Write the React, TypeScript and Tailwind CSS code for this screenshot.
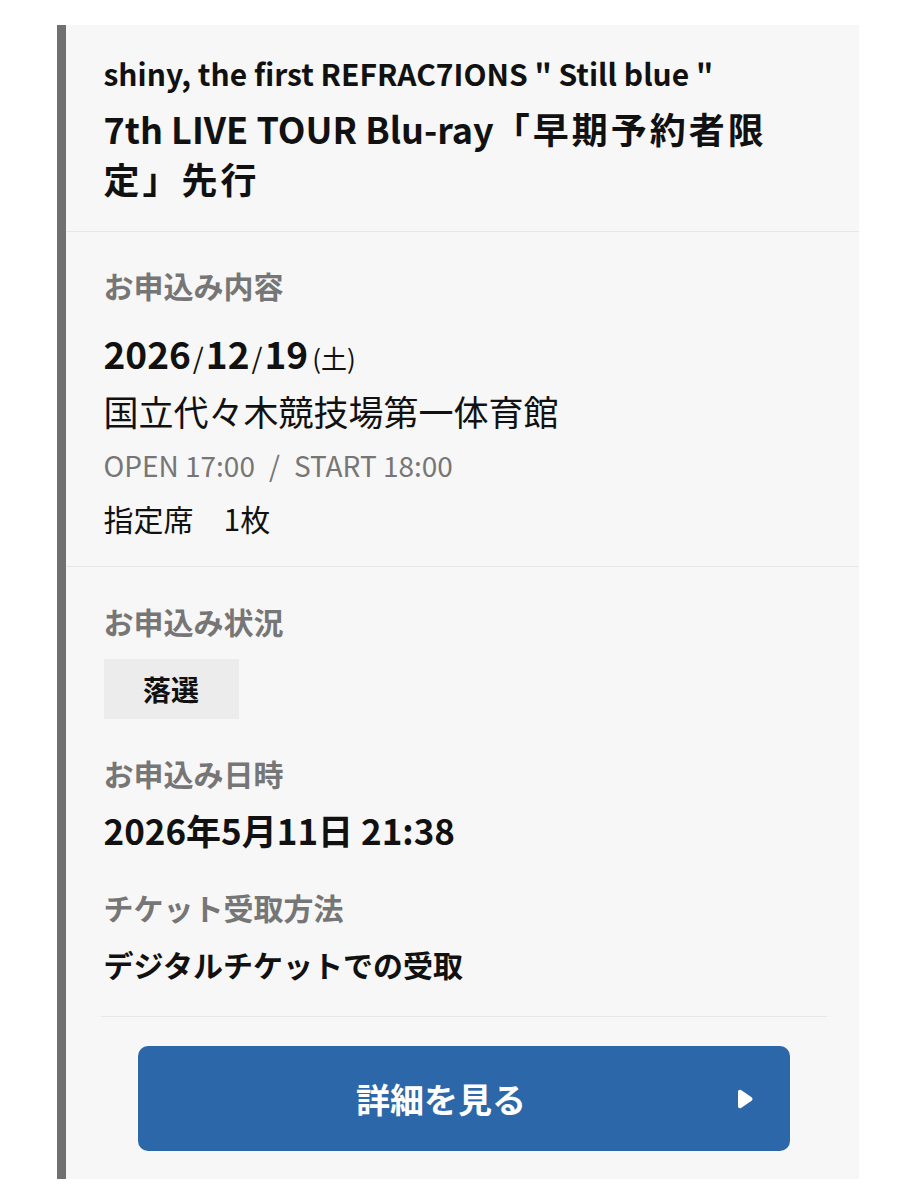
import React from 'react';

const font = { fontFamily: '"Noto Sans CJK JP", "Noto Sans", sans-serif' };

function Label({ children, className = '' }: { children: React.ReactNode; className?: string }) {
  return (
    <p className={`text-[30px] leading-[40px] font-bold text-[#767676] ${className}`}>{children}</p>
  );
}

export default function App() {
  return (
    <div className="min-h-screen bg-white pt-[25px]" style={font}>
      <div className="mx-auto w-[802px] border-l-[9px] border-[#707070] bg-[#f7f7f7] text-[#111]">
        {/* title */}
        <div className="pl-[38px] pr-[60px] pt-[26px] pb-[28px] border-b border-[#e6e6e6]">
          <p className="text-[30px] leading-[44px] font-bold">
            shiny, the first REFRAC7IONS " Still blue "
          </p>
          <h1 className="mt-[8px] text-[36px] leading-[50px] font-bold">
            7th LIVE TOUR Blu-ray<span className="tracking-[3px]">「早期予約者限定」先行</span>
          </h1>
        </div>

        {/* application details */}
        <div className="px-[38px] pt-[33px] pb-[28px] border-b border-[#e6e6e6]">
          <Label>お申込み内容</Label>
          <p className="mt-[26px] leading-[44px] font-bold text-[37px]">
            2026<span className="font-normal text-[28px] mx-[2px]">/</span>12
            <span className="font-normal text-[28px] mx-[2px]">/</span>19
            <span className="font-normal text-[26px] ml-[4px]">(土)</span>
          </p>
          <p className="mt-[6px] text-[35px] leading-[50px]">国立代々木競技場第一体育館</p>
          <p className="mt-[9px] text-[28px] leading-[40px] text-[#767676]">
            OPEN 17:00<span className="mx-[14px]">/</span>START 18:00
          </p>
          <p className="mt-[13px] text-[30px] leading-[40px]">指定席　1枚</p>
        </div>

        {/* status */}
        <div className="pt-[34px] pb-[28px]">
          <div className="px-[38px]">
            <Label>お申込み状況</Label>
            <div className="mt-[18px] w-[135px] h-[60px] flex items-center justify-center bg-[#ececec] text-[28px] font-bold">
              落選
            </div>
            <Label className="mt-[34px]">お申込み日時</Label>
            <p className="mt-[13px] text-[35px] leading-[48px] font-bold">2026年5月11日 21:38</p>
            <Label className="mt-[33px]">チケット受取方法</Label>
            <p className="mt-[15px] text-[30px] leading-[44px] font-bold">デジタルチケットでの受取</p>
          </div>

          <div className="ml-[35px] mr-[32px] mt-[30px] border-t border-[#e6e6e6] pt-[29px] px-[37px]">
            <button className="relative w-full h-[105px] rounded-[10px] bg-[#2c67a9] text-white flex items-center justify-center">
              <span className="pr-[45px] text-[34px] font-bold">詳細を見る</span>
              <svg
                className="absolute right-[36px] top-1/2 -translate-y-1/2"
                width="18"
                height="21"
                viewBox="0 0 18 21"
              >
                <path
                  d="M2 3.2c0-1.6 1.7-2.5 3-1.7l10.6 7.3c1.2.8 1.2 2.6 0 3.4L5 19.5c-1.3.8-3 0-3-1.7z"
                  fill="white"
                />
              </svg>
            </button>
          </div>
        </div>
      </div>
    </div>
  );
}
